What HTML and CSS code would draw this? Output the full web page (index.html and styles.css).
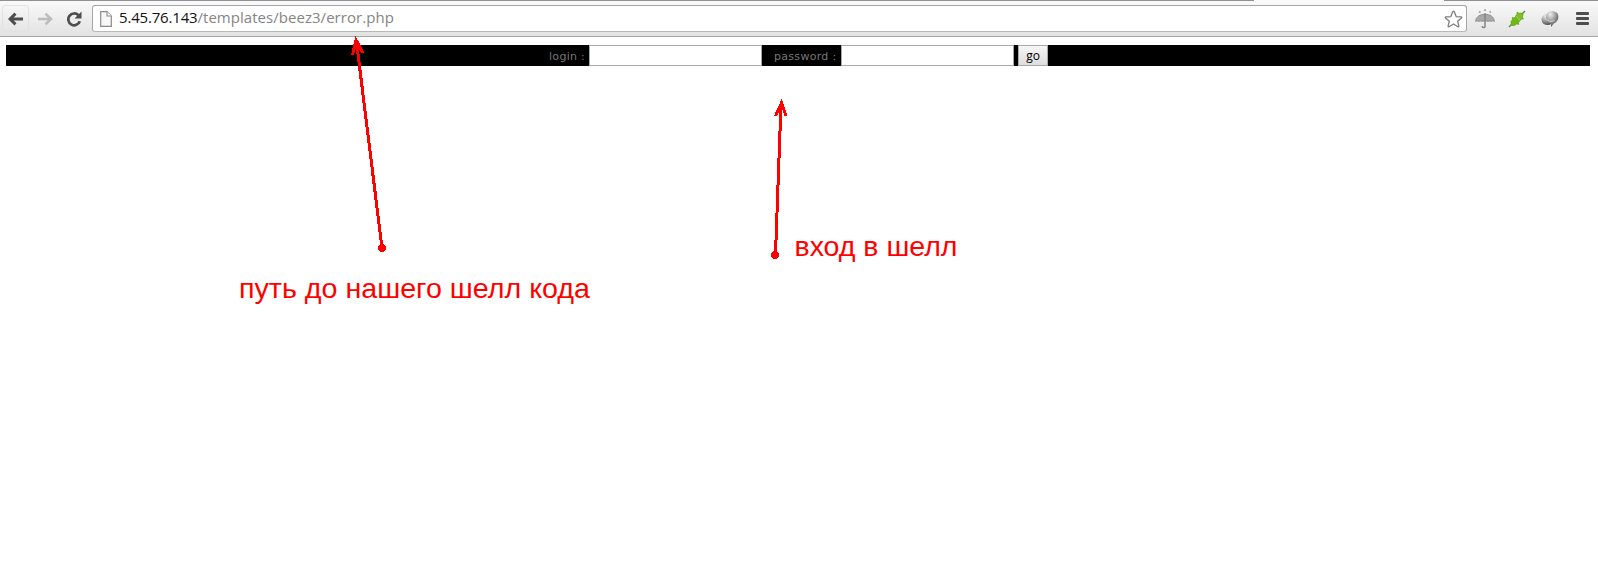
FILE: index.html
```
<!DOCTYPE html>
<html lang="ru">
<head>
<meta charset="utf-8">
<title>error.php</title>
<link rel="stylesheet" href="styles.css">
</head>
<body>
<header class="toolbar">
  <div class="tab-edge"><i class="edge-left"></i><i class="edge-right"></i></div>
  <div class="controls">
    <div class="nav back"><svg width="16" height="14" viewBox="0 0 16 14"><path d="M15 7H3M7.500 1.600L2 7l5.500 5.400" fill="none" stroke="#4d4d4d" stroke-width="2.900"/></svg></div>
    <div class="nav forward"><svg width="16" height="14" viewBox="0 0 16 14"><path d="M1 7h12M8.500 1.600L14 7l-5.500 5.400" fill="none" stroke="#bcbcbc" stroke-width="2.600"/></svg></div>
    <div class="nav reload"><svg width="16" height="16" viewBox="0 0 16 16"><path d="M12.400 4.200A5.900 5.900 0 1 0 13.800 10.300" fill="none" stroke="#4d4d4d" stroke-width="2.700"/><path d="M15.500.5v7H8.500z" fill="#4d4d4d"/></svg></div>
    <div class="omnibox">
      <svg class="page-icon" width="12" height="16" viewBox="0 0 12 16"><path d="M.7.700h6.300l4.300 4.300v10.300H.7z" fill="#f7f7f7" stroke="#8c8c8c" stroke-width="1.200"/><path d="M7 .7V5h4.300" fill="#fff" stroke="#8c8c8c" stroke-width="1.100"/></svg>
      <span class="url"><span class="host">5.45.76.143</span><span class="path">/templates/beez3/error.php</span></span>
      <svg class="star" width="19" height="18" viewBox="0 0 19 18"><path d="M9.500 1.200q.6 0 .9.800l1.800 4.600 4.900.3q1.200.2.300 1.100l-3.700 3.200 1.200 4.800q.1 1.200-1 .7L9.500 14l-4.400 2.700q-1.100.5-1-.7l1.200-4.800L1.600 8q-.9-.9.300-1.100l4.900-.3L8.600 2q.3-.8.900-.8z" fill="#fff" stroke="#808080" stroke-width="1.300"/></svg>
    </div>
    <svg class="ext umbrella" width="20" height="20" viewBox="0 0 20 20"><path d="M.6 12.400C1 7.500 5 5.300 10 5.300s9 2.200 9.400 7.100q-1.500-1.200-3.200 0-1.500-1-3.100 0-1.500-.8-3.100 0-1.600-.8-3.100 0-1.600-1-3.100 0-1.700-1.200-3.200 0z" fill="#a8a8a8" stroke="#858585" stroke-width=".8"/><path d="M10 4.300v13q-.2 1.500-1.600 1.300-1.200-.2-1.200-1.700" fill="none" stroke="#858585" stroke-width="1.500"/><path d="M4 2.600l1.500 1M9 1.200h2M14.500 3.600l1.500-1" stroke="#aaa" stroke-width="1.800"/></svg>
    <svg class="ext plug" width="18" height="18" viewBox="0 0 18 18"><path d="M1 17l4-4M13 5l4-4" stroke="#698b35" stroke-width="1.500"/><path d="M3 11.600l1.400-1.800V7.400l1.800.8L8 6l4.300 4.800-2.100 1.600.7 1.800-2.400-.2-2.200 1.500-2.600-.3z" fill="#6fb916" stroke="#5e9e12" stroke-width=".8"/><path d="M7.600 5.500l1.600-1.100-.1-2.400 1.900 1.400L13.500 3l1.600 1.800-1 2.300 1.300 1.900h-2.200l-1.200 1.400z" fill="#79c41d" stroke="#5e9e12" stroke-width=".8"/><path d="M7.300 5.300l5.200 5.800" stroke="#cde8a4" stroke-width=".7"/></svg>
    <svg class="ext bubbles" width="18" height="18" viewBox="0 0 18 18"><defs><radialGradient id="metal" cx=".35" cy=".2" r=".9"><stop offset="0" stop-color="#eee"/><stop offset=".5" stop-color="#999"/><stop offset="1" stop-color="#404040"/></radialGradient></defs><ellipse cx="6.500" cy="9.500" rx="6" ry="5.600" fill="url(#metal)"/><path d="M11.200 1.200c4 0 6.200 2.200 6.200 5.600 0 3.500-2.200 5.900-4.500 6.600L10 17v-3.500C6.600 12.700 5 10.500 5 7.100c0-3.600 2.500-5.900 6.200-5.900z" fill="url(#metal)"/><path d="M4.500 8.500q4 4.500 9 2" fill="none" stroke="#d4d4d4" stroke-width="1"/></svg>
    <svg class="menu" width="13" height="13" viewBox="0 0 13 13"><g fill="#4d4d4d"><rect width="13" height="3" rx="1"/><rect y="5" width="13" height="3" rx="1"/><rect y="10" width="13" height="3" rx="1"/></g></svg>
  </div>
</header>
<main class="page">
  <form class="login">
    <label class="login-label" for="user">login :</label>
    <input class="field" id="user" type="text">
    <label class="pass-label" for="pass">password :</label>
    <input class="field" id="pass" type="password">
    <button class="go" type="button">go</button>
  </form>
</main>
<svg class="notes" width="1598" height="578" viewBox="0 0 1598 578">
  <g fill="none" stroke="#f00" stroke-width="3" shape-rendering="crispEdges">
    <path d="M382 248L356.500 42M352.500 55l3.500-15 7 13"/>
    <path d="M775.500 254L781 104M775.500 116l6-13 4.500 13"/>
  </g>
  <g fill="#f00" shape-rendering="crispEdges">
    <path d="M355.500 37l5.500 12h-8z"/><path d="M781.500 99l4 10h-8z"/>
    <circle cx="382" cy="248" r="4"/><circle cx="775" cy="255" r="4"/>
  </g>
  <text class="note" x="239" y="298" textLength="351" lengthAdjust="spacingAndGlyphs">путь до нашего шелл кода</text>
  <text class="note" x="794.500" y="256" textLength="163" lengthAdjust="spacingAndGlyphs">вход в шелл</text>
</svg>
</body>
</html>
```
FILE: styles.css
```
body { margin: 0; background: #fff; height: 578px; overflow: hidden; position: relative; }
.toolbar { box-sizing: border-box; height: 37px; border-bottom: 1px solid #a5a5a5; background: linear-gradient(#fafafa, #e2e2e2); }
.tab-edge { display: flex; justify-content: space-between; height: 1px; }
.edge-left { width: 1254px; background: #8f8f98; }
.edge-right { width: 154px; background: #8f8f98; }
.controls { display: flex; align-items: center; height: 35px; }
.nav { box-sizing: border-box; display: flex; align-items: center; justify-content: center; flex: none; height: 27px; }
.back { width: 27px; margin-left: 2px; border: 1px solid #e2e2e2; border-radius: 3px; }
.forward { width: 31px; }
.reload { width: 27px; }
.omnibox { box-sizing: border-box; display: flex; align-items: center; width: 1375px; height: 27px; margin-left: 5px; flex: none; border: 1px solid #a6a6a6; border-bottom-color: #b8b8b8; border-radius: 3px; background: #fff; padding: 0 3px 0 7px; }
.page-icon { margin-right: 7px; flex: none; }
.url { flex: 1; padding-bottom: 2px; font: 15px/23px "Open Sans", "Noto Sans", sans-serif; white-space: nowrap; }
.host { color: #111; letter-spacing: -0.18px; }
.path { color: #858585; letter-spacing: 0.04px; }
.star { flex: none; }
.ext { flex: none; }
.umbrella { margin-left: 8px; }
.plug { margin-left: 13px; }
.bubbles { margin-left: 15px; }
.menu { margin-left: 17px; flex: none; }
.page { padding: 8px 8px 0 6px; }
.login { display: flex; height: 21px; background: #000; color: #777; font: 11px/23px "DejaVu Sans", sans-serif; white-space: nowrap; }
.login-label { width: 40px; margin-left: 543px; letter-spacing: 0.3px; }
.pass-label { width: 67px; margin-left: 12px; letter-spacing: 0.3px; }
.field { box-sizing: border-box; width: 173px; height: 21px; margin: 0; padding: 1px; border: 1px solid #a9a9a9; border-radius: 0; background: #fff; outline: 0; }
.go { box-sizing: border-box; width: 30px; height: 21px; margin: 0 0 0 4px; padding: 0; border: 1px solid #a9a9a9; border-radius: 0; background: linear-gradient(#f6f6f6, #ddd); color: #000; font: 12px/19px "Open Sans", sans-serif; }
.notes { position: absolute; left: 0; top: 0; }
.note { fill: #f00; font: 28px "Liberation Sans", Arial, sans-serif; }
```
